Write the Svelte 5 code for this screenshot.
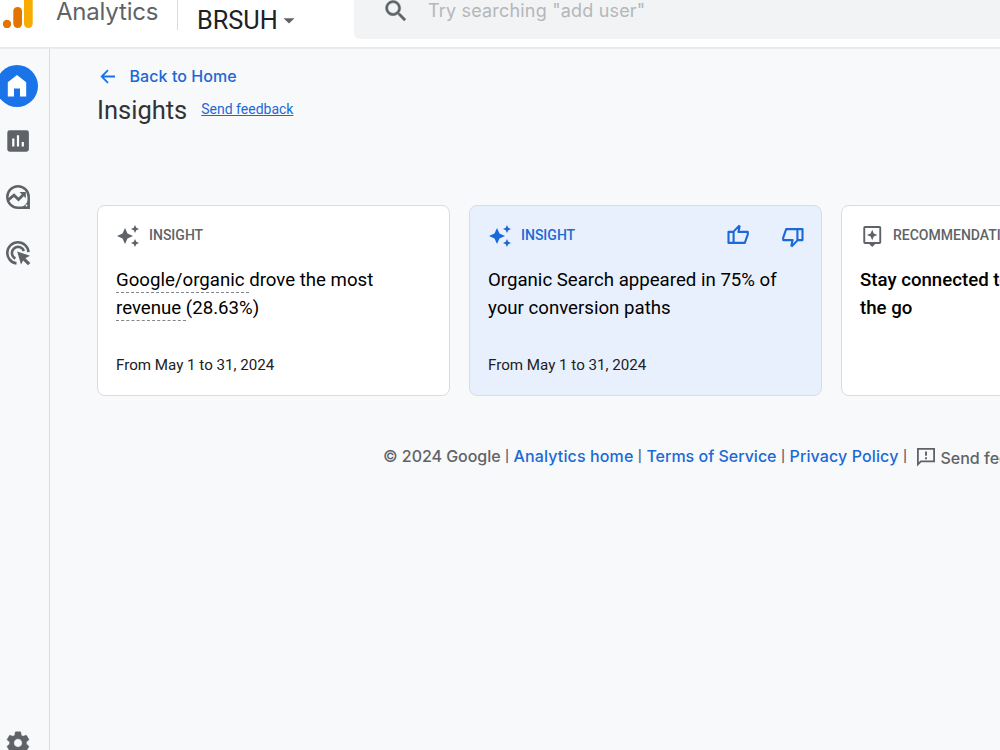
<script>
  const cards = [
    { kind: 'insight', label: 'INSIGHT', date: 'From May 1 to 31, 2024' },
    { kind: 'insight', label: 'INSIGHT', date: 'From May 1 to 31, 2024', active: true },
    { kind: 'rec', label: 'RECOMMENDATION', date: '' }
  ];
</script>

<div class="app">
  <header>
    <svg class="logo" width="31" height="28" viewBox="0 0 31 28">
      <circle cx="5" cy="24" r="4.2" fill="#e37400" />
      <rect x="11.3" y="7" width="8.7" height="21" rx="4.2" fill="#e37400" />
      <rect x="22" y="-8" width="8.7" height="36" rx="4.2" fill="#f9ab00" />
    </svg>
    <span class="product">Analytics</span>
    <span class="divider"></span>
    <button class="account">
      <span>BRSUH</span>
      <svg width="12" height="6" viewBox="0 0 12 6"><path d="M0.5 0.3H11.5L6 5.6Z" fill="#5f6368" /></svg>
    </button>
    <div class="search">
      <svg width="28" height="28" viewBox="0 0 24 24"><path fill="#5f6368" stroke="#5f6368" stroke-width="0.4" d="M15.5 14h-.79l-.28-.27A6.47 6.47 0 0 0 16 9.5 6.5 6.5 0 1 0 9.5 16c1.61 0 3.09-.59 4.23-1.57l.27.28v.79l5 4.99L20.49 19l-4.99-5zm-6 0C7.01 14 5 11.99 5 9.5S7.01 5 9.5 5 14 7.01 14 9.5 11.99 14 9.5 14z" /></svg>
      <span>Try searching "add user"</span>
    </div>
  </header>

  <div class="body">
    <nav>
      <a class="home" href="#home" aria-label="Home">
        <svg width="20" height="22" viewBox="0 0 20 22"><path fill="#fff" d="M10 0 19.2 7.2V21.5H13V13.5H7V21.5H0.8V7.2Z" /></svg>
      </a>
      <svg class="item" width="24" height="24" viewBox="0 0 24 24"><rect x="1.3" y="1.3" width="21.6" height="21.4" rx="2.4" fill="#5f6368" /><path d="M7.3 9.5V17.4M12 6.3V17.4M16.8 13V17.4" stroke="#fff" stroke-width="2.2" /></svg>
      <svg class="item" width="26" height="26" viewBox="0 0 26 26" fill="none" stroke="#5f6368">
        <path d="M13 2.3A10.7 10.7 0 1 0 13 23.7H23.7V13A10.7 10.7 0 0 0 13 2.3Z" stroke-width="2.5" />
        <path d="M3 16.2 9 11.2 13.5 15.5 19 10" stroke-width="2.8" />
        <path d="M14.5 8H20.8V14.3Z" fill="#5f6368" stroke="none" />
        <path d="M23.5 14C23.2 18 20 22 15.5 23.5H24Z" fill="#5f6368" stroke="none" />
        <circle cx="21.5" cy="21.5" r="0.9" fill="#fff" stroke="none" />
      </svg>
      <svg class="item" width="26" height="26" viewBox="0 0 26 26" fill="none" stroke="#5f6368" stroke-width="2.6">
        <path d="M11.5 23.4A10.6 10.6 0 1 1 23.5 12.2" />
        <path d="M10.4 18.5A6.1 6.1 0 1 1 18.8 11" />
        <path d="M12.2 11.6 25 15.8 20.4 18.2 25.3 23.1 23 25.3 18.2 20.4 16 24.6Z" fill="#5f6368" stroke="none" />
      </svg>
      <svg class="gear" width="28" height="28" viewBox="0 0 24 24"><path fill="#5f6368" stroke="#5f6368" stroke-width="0.4" d="M19.14 12.94c.04-.3.06-.61.06-.94 0-.32-.02-.64-.07-.94l2.03-1.58c.18-.14.23-.41.12-.61l-1.92-3.32c-.12-.22-.37-.29-.59-.22l-2.39.96c-.5-.38-1.03-.7-1.62-.94l-.36-2.54c-.04-.24-.24-.41-.48-.41h-3.84c-.24 0-.43.17-.47.41l-.36 2.54c-.59.24-1.13.57-1.62.94l-2.39-.96c-.22-.08-.47 0-.59.22L2.74 8.87c-.12.21-.08.47.12.61l2.03 1.58c-.05.3-.09.63-.09.94s.02.64.07.94l-2.03 1.58c-.18.14-.23.41-.12.61l1.92 3.32c.12.22.37.29.59.22l2.39-.96c.5.38 1.03.7 1.62.94l.36 2.54c.05.24.24.41.48.41h3.84c.24 0 .44-.17.47-.41l.36-2.54c.59-.24 1.13-.56 1.62-.94l2.39.96c.22.08.47 0 .59-.22l1.92-3.32c.12-.22.07-.47-.12-.61l-2.01-1.58zM12 15.6c-1.98 0-3.6-1.62-3.6-3.6s1.62-3.6 3.6-3.6 3.6 1.62 3.6 3.6-1.62 3.6-3.6 3.6z" /></svg>
    </nav>

    <main>
      <a class="back" href="#back">
        <svg width="16" height="15" viewBox="0 0 16 15"><path d="M15 7.5H2M8 1.2 1.7 7.5 8 13.8" fill="none" stroke="#1a73e8" stroke-width="1.8" /></svg>
        <span>Back to Home</span>
      </a>
      <div class="heading">
        <h1>Insights</h1>
        <a href="#feedback">Send feedback</a>
      </div>

      <section class="cards">
        {#each cards as card, i}
          <article class:active={card.active}>
            <div class="label">
              {#if card.kind === 'insight'}
                <svg width="24" height="24" viewBox="0 0 24 24" fill="currentColor"><path d="M19 9l1.25-2.75L23 5l-2.75-1.25L19 1l-1.25 2.75L15 5l2.75 1.25L19 9zm-7.5.5L9 4 6.5 9.5 1 12l5.5 2.5L9 20l2.5-5.5L17 12l-5.5-2.5zM19 15l-1.25 2.75L15 19l2.75 1.25L19 23l1.25-2.75L23 19l-2.75-1.25L19 15z" /></svg>
              {:else}
                <svg width="24" height="24" viewBox="0 0 24 24" fill="currentColor"><path fill-rule="evenodd" d="M5 2H19.5A1.7 1.7 0 0 1 21.2 3.7V18.3A1.7 1.7 0 0 1 19.5 20H15.2L12.2 23 9.2 20H5A1.7 1.7 0 0 1 3.3 18.3V3.7A1.7 1.7 0 0 1 5 2ZM5.2 4V18H19.3V4Z" /><path d="M12.2 5.8 13.8 9.4 17.4 11 13.8 12.6 12.2 16.2 10.6 12.6 7 11 10.6 9.4Z" /></svg>
              {/if}
              <span>{card.label}</span>
              {#if card.active}
                <div class="votes">
                  <svg width="24" height="24" viewBox="0 0 24 24" fill="none" stroke="currentColor" stroke-width="2.1" stroke-linejoin="round"><path d="M2.5 7.9H7.3L13 1.9 13.6 2.5 12.4 7.9H21.8V10.4L18.8 18.9H2.5ZM7.6 7.9V18.9" /></svg>
                  <svg class="down" width="24" height="24" viewBox="0 0 24 24" fill="none" stroke="currentColor" stroke-width="2.1" stroke-linejoin="round"><path d="M2.5 7.9H7.3L13 1.9 13.6 2.5 12.4 7.9H21.8V10.4L18.8 18.9H2.5ZM7.6 7.9V18.9" /></svg>
                </div>
              {/if}
            </div>
            {#if i === 0}
              <p><span class="term">Google/organic&nbsp;</span>drove the most<br /><span class="term">revenue&nbsp;</span>(28.63%)</p>
            {:else if i === 1}
              <p>Organic Search appeared in 75% of<br />your conversion paths</p>
            {:else}
              <p class="strong">Stay connected to<br />the go</p>
            {/if}
            <time>{card.date}</time>
          </article>
        {/each}
      </section>

      <footer>
        <span class="copy">© 2024 Google</span><i>|</i>
        <a class="f1" href="#analytics">Analytics home</a><i>|</i>
        <a href="#terms">Terms of Service</a><i>|</i>
        <a class="f3" href="#privacy">Privacy Policy</a><i>|</i>
        <svg width="20" height="20" viewBox="0 0 20 20"><path d="M1.9 17.3V1.9H18.1V14.3H4.9Z" fill="none" stroke="#5f6368" stroke-width="1.8" /><path d="M10 4.5V8.7M10 10.3V12.2" stroke="#5f6368" stroke-width="1.9" /></svg>
        <span class="send">Send feedback</span>
      </footer>
    </main>
  </div>
</div>

<style>
  :global(body) { margin: 0; overflow: hidden; }
  * { box-sizing: border-box; }
  .app { width: 1000px; height: 750px; overflow: hidden; display: flex; flex-direction: column; background: #f8f9fb; font-family: Roboto, sans-serif; color: #000; }
  a { color: #1b69d6; text-decoration: none; }
  header { height: 49px; flex: none; display: flex; align-items: flex-start; background: #fff; border-bottom: 2px solid #e8eaed; padding-left: 2px; overflow: hidden; }
  .logo { flex: none; }
  .product { width: 103px; margin: -3px 0 0 23px; font: 24px/30px Inter, sans-serif; letter-spacing: -0.2px; color: #5f6368; white-space: nowrap; }
  .divider { width: 1px; height: 30px; margin-left: 18px; background: #dadce0; }
  .account { width: 157px; height: 30px; margin: 6px 0 0 19px; padding: 0; border: 0; background: none; display: flex; align-items: center; gap: 5px; font: 25.3px/30px Roboto, sans-serif; color: #202124; }
  .search { flex: 1; height: 39px; padding: 0 0 0 28px; display: flex; align-items: flex-start; background: #f1f3f4; border-radius: 0 0 0 6px; white-space: nowrap; font: 18px/24px Inter, sans-serif; letter-spacing: 0.18px; color: #b4b7ba; }
  .search svg { margin-top: -3px; }
  .search span { margin: -1px 0 0 18px; }
  .body { flex: 1; min-height: 0; display: flex; }
  nav { width: 50px; flex: none; border-right: 1px solid #dadce0; padding-top: 16px; display: flex; flex-direction: column; overflow: hidden; }
  .home { width: 42px; height: 42px; flex: none; margin-left: -4px; border-radius: 50%; background: #1a73e8; display: grid; place-items: center; }
  .item { flex: none; margin-left: 5px; }
  .home + .item { margin-top: 22px; margin-bottom: 31px; margin-left: 6px; }
  .item + .item + .item { margin-top: 30px; }
  .gear { flex: none; margin: auto 0 -7px 4px; }
  main { flex: 1; min-width: 0; padding: 16px 0 0 47px; overflow: hidden; }
  .back { display: flex; align-items: center; height: 22px; gap: 14px; padding-left: 2.5px; font: 500 16px/22px Inter, sans-serif; letter-spacing: 0.07px; }
  .back svg { margin-top: 1px; }
  .heading { display: flex; align-items: center; height: 44px; gap: 14px; margin-top: 1px; }
  h1 { margin: 0; font-size: 25.5px; font-weight: 400; line-height: 44px; color: #333; }
  .heading a { font-size: 14px; text-decoration: underline; margin-top: -2px; }
  .cards { display: flex; gap: 19px; margin-top: 73px; }
  article { width: 353px; height: 191px; flex: none; padding: 18px; border: 1px solid #dadce0; border-radius: 8px; background: #fff; white-space: nowrap; }
  article.active { background: #e8f0fe; }
  .label { display: flex; align-items: center; height: 24px; gap: 9px; color: #5f6368; font-weight: 500; font-size: 14px; }
  .label span { margin-top: -2px; }
  .active .label { color: #1b69d6; }
  .votes { display: flex; gap: 31px; margin-left: auto; margin-right: -2px; }
  .down { transform: rotate(180deg); }
  p { margin: 18px 0 0; font-size: 18.65px; line-height: 28px; }
  .strong { font-weight: 500; }
  .term { border-bottom: 1px dashed #80868b; padding-bottom: 1px; }
  time { display: block; margin-top: 33px; font-size: 15.15px; line-height: 20px; color: #202124; }
  footer { display: flex; align-items: center; height: 24px; margin: 48px 0 0 286px; white-space: nowrap; font: 500 16px/24px Inter, sans-serif; color: #5f6368; }
  footer i { font: 500 16.5px/22px Roboto, sans-serif; width: 13px; text-align: center; flex: none; }
  .copy { letter-spacing: -0.04px; }
  .f1, .f3 { letter-spacing: 0.12px; }
  footer svg { flex: none; margin: 2px 5px 0 4px; }
  .send { margin-top: 3px; }
</style>
